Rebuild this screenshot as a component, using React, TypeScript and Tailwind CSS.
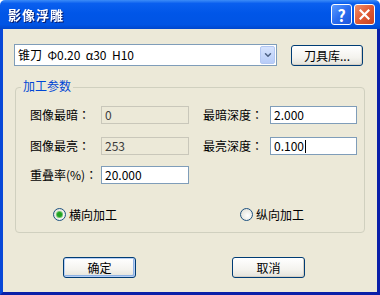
import { ChevronDown } from "lucide-react";

const font = { fontFamily: '"Noto Sans CJK SC", "Noto Sans", sans-serif' };

function XpButton({ label, wide, isDefault }: { label: string; wide: string; isDefault?: boolean }) {
  return (
    <button
      className={`${wide} h-[21px] rounded-[3px] border border-[#003C74] bg-[linear-gradient(180deg,#FFFFFF_0%,#F4F3EE_60%,#E3E2DA_100%)] text-[12px] leading-none text-black flex items-center justify-center ${
        isDefault ? "shadow-[inset_0_0_0_1px_#B7CFF5,inset_-1px_-1px_0_1px_#8DB2E3]" : "shadow-[inset_-1px_-1px_0_#D6D0C5]"
      }`}
    >
      {label}
    </button>
  );
}

function Label({ text, wide }: { text: string; wide: string }) {
  return (
    <span className={`${wide} shrink-0 text-[12px] leading-none text-black whitespace-pre`}>
      {text}
      <span className="font-['Noto_Sans_CJK_TC']">：</span>
    </span>
  );
}

function Field({ value, disabled, caret }: { value: string; disabled?: boolean; caret?: boolean }) {
  return (
    <div
      className={`h-[18px] flex items-center pl-[3px] text-[12px] leading-none border ${
        disabled ? "w-[88px] bg-[#ECE9D8] border-[#C9C7BA] text-[#3C3C3C]" : "bg-white border-[#7F9DB9] text-black"
      }`}
    >
      <span>{value}</span>
      {caret && <span className="ml-[1px] w-px h-[13px] bg-black" />}
    </div>
  );
}

function Radio({ checked, label }: { checked?: boolean; label: string }) {
  return (
    <div className="flex items-center gap-[3px]">
      <span className="w-[13px] h-[13px] rounded-full border border-[#1C5180] bg-[radial-gradient(circle_at_60%_60%,#FFFFFF_0%,#E6E5DE_70%,#D2D0C6_100%)] flex items-center justify-center">
        {checked && <span className="w-[5px] h-[5px] rounded-full bg-[#21A121] shadow-[0_0_0_1px_#6BC56B]" />}
      </span>
      <span className="text-[12px] leading-none text-black">{label}</span>
    </div>
  );
}

export default function App() {
  return (
    <div className="w-[380px] h-[295px] flex flex-col bg-white select-none" style={font}>
      {/* Title bar */}
      <div className="h-[29px] flex items-center pl-[8px] pr-[5px] bg-[linear-gradient(180deg,#3C8CF8_0%,#0A5FEF_12%,#0056E8_45%,#0054E4_85%,#0046CC_100%)] rounded-t-[5px]">
        <span className="text-white font-bold text-[13px] tracking-[1px] drop-shadow-[1px_1px_0_#0A1E70]">影像浮雕</span>
        <div className="ml-auto flex gap-[2px]">
          <div className="w-[21px] h-[21px] rounded-[3px] border border-white bg-[linear-gradient(135deg,#5C9BFF_0%,#2A6DF0_50%,#1C55DB_100%)] flex items-center justify-center text-white font-bold text-[16px] leading-none">
            ?
          </div>
          <div className="w-[21px] h-[21px] rounded-[3px] border border-white bg-[linear-gradient(135deg,#F0906C_0%,#E05A34_50%,#C84222_100%)] flex items-center justify-center">
            <svg width="11" height="11" viewBox="0 0 11 11">
              <path d="M1.5 1.5 L9.5 9.5 M9.5 1.5 L1.5 9.5" stroke="white" strokeWidth="2.2" strokeLinecap="square" />
            </svg>
          </div>
        </div>
      </div>

      {/* Client area inside frame */}
      <div className="flex-1 flex flex-col bg-[#ECE9D8] border-l-[3px] border-l-[#0848D8] border-r-[3px] border-r-[#0A1FA8] border-b-[3px] border-b-[#0A1FA8]">
        <div className="flex items-start pl-[11px] pt-[15px]">
          <div className="w-[263px] h-[22px] border border-[#7F9DB9] bg-white flex items-center pl-[3px] pr-[1px]">
            <span className="text-[12px] leading-none text-black whitespace-pre">锥刀  Φ0.20  α30  H10</span>
            <div className="ml-auto w-[15px] h-[18px] rounded-[2px] bg-[linear-gradient(180deg,#D6E3FD_0%,#B7CCF8_100%)] border border-[#B3C7F2] flex items-center justify-center">
              <ChevronDown size={10} strokeWidth={3.5} className="text-[#4D6185]" />
            </div>
          </div>
          <div className="ml-[14px] mt-[1px]">
            <XpButton label="刀具库..." wide="w-[72px]" />
          </div>
        </div>

        {/* Group box */}
        <div className="relative ml-[12px] mt-[21px] w-[350px] h-[146px] border border-[#D0D0BF] rounded-[4px]">
          <span className="absolute -top-[8px] left-[5px] px-[2px] bg-[#ECE9D8] text-[12px] leading-none text-[#0046D5]">
            加工参数
          </span>

          <div className="flex flex-col pl-[14px] pt-[18px]">
            <div className="flex items-center h-[18px]">
              <Label text="图像最暗" wide="w-[71px]" />
              <Field value="0" disabled />
              <span className="ml-[14px]" />
              <Label text="最暗深度" wide="w-[67px]" />
              <div className="w-[87px]">
                <Field value="2.000" />
              </div>
            </div>
            <div className="flex items-center h-[18px] mt-[13px]">
              <Label text="图像最亮" wide="w-[71px]" />
              <Field value="253" disabled />
              <span className="ml-[14px]" />
              <Label text="最亮深度" wide="w-[67px]" />
              <div className="w-[87px]">
                <Field value="0.100" caret />
              </div>
            </div>
            <div className="flex items-center h-[18px] mt-[11px]">
              <Label text="重叠率(%)" wide="w-[71px]" />
              <div className="w-[88px]">
                <Field value="20.000" />
              </div>
            </div>
            <div className="flex items-center mt-[24px] pl-[23px]">
              <div className="w-[187px]">
                <Radio checked label="横向加工" />
              </div>
              <Radio label="纵向加工" />
            </div>
          </div>
        </div>

        <div className="flex pl-[60px] mt-[24px] gap-[96px]">
          <XpButton label="确定" wide="w-[73px]" isDefault />
          <XpButton label="取消" wide="w-[73px]" />
        </div>
      </div>
    </div>
  );
}
